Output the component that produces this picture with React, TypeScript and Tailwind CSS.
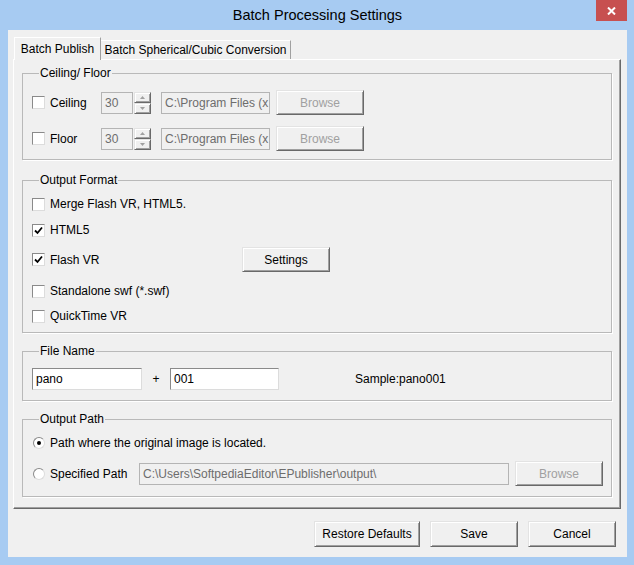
import React from "react";

const raised =
  "border border-t-[#e3e3e3] border-l-[#e3e3e3] border-r-[#696969] border-b-[#696969] shadow-[inset_1px_1px_0_#fff,inset_-1px_-1px_0_#a0a0a0] bg-[#f0f0f0]";
const sunken =
  "border border-t-[#8a8a8a] border-l-[#8a8a8a] border-r-[#dcdcdc] border-b-[#dcdcdc]";

function Checkbox({ checked = false }: { checked?: boolean }) {
  return (
    <span className={`w-[13px] h-[13px] shrink-0 bg-white flex items-center justify-center ${sunken}`}>
      {checked && (
        <svg width="9" height="9" viewBox="0 0 9 9">
          <path d="M1 4.5 L3.5 7 L8 1.5" fill="none" stroke="#000" strokeWidth="1.8" />
        </svg>
      )}
    </span>
  );
}

function Radio({ checked = false }: { checked?: boolean }) {
  return (
    <span className="w-[13px] shrink-0 flex">
      <span className={`ml-[1px] w-[12px] h-[12px] rounded-full bg-white flex items-center justify-center ${sunken}`}>
        {checked && <span className="w-[4px] h-[4px] rounded-full bg-black" />}
      </span>
    </span>
  );
}

function Btn({ label, w, disabled = false }: { label: string; w: string; disabled?: boolean }) {
  return (
    <button className={`${w} h-[25px] shrink-0 text-[12px] flex items-center justify-center ${raised} ${disabled ? "text-[#a0a0a0]" : "text-black"}`}>
      {label}
    </button>
  );
}

function DisabledField({ value, w }: { value: string; w: string }) {
  return (
    <div className={`${w} h-[22px] shrink-0 bg-[#f0f0f0] border border-[#b4b4b4] text-[#6d6d6d] text-[12px] pl-[3px] flex items-center overflow-hidden whitespace-nowrap`}>
      {value}
    </div>
  );
}

function Spin() {
  const half = `h-[11px] flex items-center justify-center ${raised}`;
  return (
    <div className="ml-[1px] w-[17px] h-[22px] flex flex-col">
      <div className={half}>
        <svg width="5" height="3" viewBox="0 0 5 3"><path d="M0 3 L2.5 0 L5 3Z" fill="#a0a0a0" /></svg>
      </div>
      <div className={half}>
        <svg width="5" height="3" viewBox="0 0 5 3"><path d="M0 0 L2.5 3 L5 0Z" fill="#a0a0a0" /></svg>
      </div>
    </div>
  );
}

function Group({ title, className = "", children }: { title: string; className?: string; children: React.ReactNode }) {
  return (
    <fieldset className={`border border-[#b9b9b9] shadow-[1px_1px_0_#fff] pl-[9px] ${className}`}>
      <legend className="ml-[7px] px-[1px] text-[12px] leading-[14px] text-black">{title}</legend>
      {children}
    </fieldset>
  );
}

function CeilRow({ label }: { label: string }) {
  return (
    <div className="h-[25px] flex items-center">
      <Checkbox />
      <span className="ml-[5px] w-[51px] text-[12px]">{label}</span>
      <DisabledField value="30" w="w-[32px]" />
      <Spin />
      <div className="ml-[10px]">
        <DisabledField value="C:\Program Files (x" w="w-[109px]" />
      </div>
      <div className="ml-[6px]">
        <Btn label="Browse" w="w-[88px]" disabled />
      </div>
    </div>
  );
}

function CheckRow({ label, checked = false, children }: { label: string; checked?: boolean; children?: React.ReactNode }) {
  return (
    <div className="flex items-center">
      <Checkbox checked={checked} />
      <span className="ml-[5px] w-[192px] text-[12px]">{label}</span>
      {children}
    </div>
  );
}

export default function App() {
  return (
    <div className="w-[634px] h-[565px] bg-[#a7cbf2] flex flex-col pl-[8px] pr-[7px] pb-[8px] font-['Liberation_Sans',Arial,sans-serif] text-black select-none">
      {/* title bar */}
      <div className="relative h-[30px] shrink-0 flex items-center justify-center pt-[2px]">
        <span className="text-[14.5px] text-black">Batch Processing Settings</span>
        <div className="absolute top-0 right-0 w-[31px] h-[21px] bg-[#c75050] flex items-center justify-center">
          <svg width="9" height="8" viewBox="0 0 9 8">
            <path d="M1 0.5 L8 7.5 M8 0.5 L1 7.5" stroke="#fff" strokeWidth="2" />
          </svg>
        </div>
      </div>

      {/* client */}
      <div className="flex-1 bg-[#f0f0f0] flex flex-col pt-[7px] pl-[5px] pr-[6px]">
        {/* tabs */}
        <div className="h-[22px] flex items-end pl-[1px] text-[12px]">
          <div className="relative z-10 -mb-[1px] w-[87px] h-[23px] bg-[#f0f0f0] border-t border-l border-r border-t-white border-l-white border-r-[#a0a0a0] flex items-center justify-center">
            Batch Publish
          </div>
          <div className="w-[190px] h-[19px] border-t border-r border-t-white border-r-[#a0a0a0] flex items-center justify-center">
            Batch Spherical/Cubic Conversion
          </div>
        </div>

        {/* tab page */}
        <div className="h-[450px] border border-t-white border-l-white border-r-[#696969] border-b-[#696969] shadow-[inset_-1px_-1px_0_#a0a0a0] px-[8px] pt-[6px] flex flex-col">
          <Group title="Ceiling/ Floor" className="pb-[8px]">
            <div className="mt-[10px]">
              <CeilRow label="Ceiling" />
            </div>
            <div className="mt-[11px]">
              <CeilRow label="Floor" />
            </div>
          </Group>

          <Group title="Output Format" className="mt-[13px] pb-[6px]">
            <div className="mt-[7px] h-[20px] flex items-center">
              <CheckRow label="Merge Flash VR, HTML5." />
            </div>
            <div className="mt-[6px] h-[20px] flex items-center">
              <CheckRow label="HTML5" checked />
            </div>
            <div className="mt-[7px] h-[25px] flex items-center">
              <CheckRow label="Flash VR" checked>
                <Btn label="Settings" w="w-[88px]" />
              </CheckRow>
            </div>
            <div className="mt-[9px] h-[20px] flex items-center">
              <CheckRow label="Standalone swf (*.swf)" />
            </div>
            <div className="mt-[5px] h-[20px] flex items-center">
              <CheckRow label="QuickTime VR" />
            </div>
          </Group>

          <Group title="File Name" className="mt-[11px] pb-[10px]">
            <div className="mt-[10px] h-[22px] flex items-center text-[12px]">
              <div className={`w-[110px] h-[22px] bg-white pl-[3px] flex items-center ${sunken}`}>pano</div>
              <span className="w-[28px] text-center">+</span>
              <div className={`w-[109px] h-[22px] bg-white pl-[3px] flex items-center ${sunken}`}>001</div>
              <span className="ml-[76px]">Sample:pano001</span>
            </div>
          </Group>

          <Group title="Output Path" className="mt-[11px] pb-[10px]">
            <div className="mt-[7px] h-[20px] flex items-center text-[12px]">
              <Radio checked />
              <span className="ml-[5px]">Path where the original image is located.</span>
            </div>
            <div className="mt-[8px] h-[25px] flex items-center text-[12px]">
              <Radio />
              <span className="ml-[5px] w-[89px]">Specified Path</span>
              <DisabledField value="C:\Users\SoftpediaEditor\EPublisher\output\" w="w-[370px]" />
              <div className="ml-[6px]">
                <Btn label="Browse" w="w-[88px]" disabled />
              </div>
            </div>
          </Group>
        </div>

        {/* dialog buttons */}
        <div className="mt-[12px] h-[26px] flex justify-end gap-[10px] pr-[5px]">
          <button className={`w-[106px] h-[26px] text-[12px] ${raised}`}>Restore Defaults</button>
          <button className={`w-[88px] h-[26px] text-[12px] ${raised}`}>Save</button>
          <button className={`w-[88px] h-[26px] text-[12px] ${raised}`}>Cancel</button>
        </div>
      </div>
    </div>
  );
}
